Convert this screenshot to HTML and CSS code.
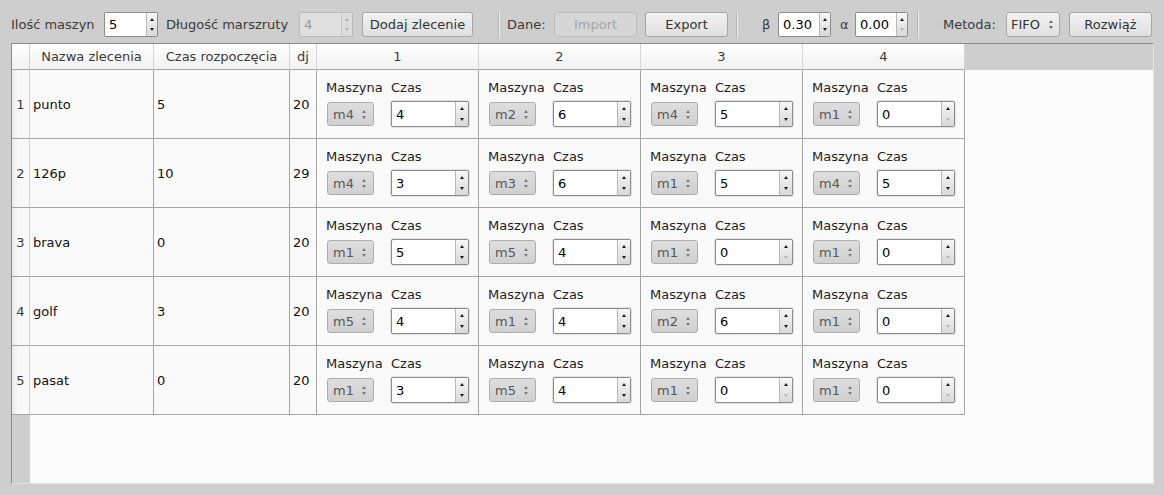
FILE: index.html
```html
<!DOCTYPE html>
<html lang="pl">
<head>
<meta charset="utf-8">
<title>Zlecenia</title>
<link rel="stylesheet" href="styles.css">
</head>
<body>
<div class="toolbar">
  <span class="lbl w-ilosc">Ilość maszyn</span>
  <div class="spin tb-spin"><span class="val">5</span><span class="arr"><i class="up"></i><i class="dn"></i></span></div>
  <span class="lbl w-dlug">Długość marszruty</span>
  <div class="spin tb-spin dis"><span class="val">4</span><span class="arr"><i class="up"></i><i class="dn"></i></span></div>
  <div class="btn w-dodaj">Dodaj zlecenie</div>
  <div class="sep sep1"></div>
  <span class="lbl w-dane">Dane:</span>
  <div class="btn w-imp dis">Import</div>
  <div class="btn w-exp">Export</div>
  <div class="sep sep2"></div>
  <span class="lbl w-beta">β</span>
  <div class="spin tb-spin w-num"><span class="val">0.30</span><span class="arr"><i class="up"></i><i class="dn"></i></span></div>
  <span class="lbl w-alfa">α</span>
  <div class="spin tb-spin w-num min"><span class="val">0.00</span><span class="arr"><i class="up"></i><i class="dn"></i></span></div>
  <div class="sep sep3"></div>
  <span class="lbl w-met">Metoda:</span>
  <div class="combo tb-combo"><span class="val">FIFO</span><span class="carr"><i class="up"></i><i class="dn"></i></span></div>
  <div class="btn w-roz">Rozwiąż</div>
</div>

<div class="table">
  <div class="hc corner"></div>
  <div class="hc">Nazwa zlecenia</div>
  <div class="hc">Czas rozpoczęcia</div>
  <div class="hc">dj</div>
  <div class="hc">1</div>
  <div class="hc">2</div>
  <div class="hc">3</div>
  <div class="hc">4</div>
  <div class="hfill"></div>

  <!-- row 1 -->
  <div class="vh">1</div>
  <div class="c">punto</div>
  <div class="c">5</div>
  <div class="c">20</div>
  <div class="c w"><div class="labs"><span class="l1">Maszyna</span><span>Czas</span></div><div class="wids"><div class="combo cc"><span class="val">m4</span><span class="carr"><i class="up"></i><i class="dn"></i></span></div><div class="spin cs"><span class="val">4</span><span class="arr"><i class="up"></i><i class="dn"></i></span></div></div></div>
  <div class="c w"><div class="labs"><span class="l1">Maszyna</span><span>Czas</span></div><div class="wids"><div class="combo cc"><span class="val">m2</span><span class="carr"><i class="up"></i><i class="dn"></i></span></div><div class="spin cs"><span class="val">6</span><span class="arr"><i class="up"></i><i class="dn"></i></span></div></div></div>
  <div class="c w"><div class="labs"><span class="l1">Maszyna</span><span>Czas</span></div><div class="wids"><div class="combo cc"><span class="val">m4</span><span class="carr"><i class="up"></i><i class="dn"></i></span></div><div class="spin cs"><span class="val">5</span><span class="arr"><i class="up"></i><i class="dn"></i></span></div></div></div>
  <div class="c w"><div class="labs"><span class="l1">Maszyna</span><span>Czas</span></div><div class="wids"><div class="combo cc"><span class="val">m1</span><span class="carr"><i class="up"></i><i class="dn"></i></span></div><div class="spin cs min"><span class="val">0</span><span class="arr"><i class="up"></i><i class="dn"></i></span></div></div></div>
  <div class="bfill"></div>

  <!-- row 2 -->
  <div class="vh">2</div>
  <div class="c">126p</div>
  <div class="c">10</div>
  <div class="c">29</div>
  <div class="c w"><div class="labs"><span class="l1">Maszyna</span><span>Czas</span></div><div class="wids"><div class="combo cc"><span class="val">m4</span><span class="carr"><i class="up"></i><i class="dn"></i></span></div><div class="spin cs"><span class="val">3</span><span class="arr"><i class="up"></i><i class="dn"></i></span></div></div></div>
  <div class="c w"><div class="labs"><span class="l1">Maszyna</span><span>Czas</span></div><div class="wids"><div class="combo cc"><span class="val">m3</span><span class="carr"><i class="up"></i><i class="dn"></i></span></div><div class="spin cs"><span class="val">6</span><span class="arr"><i class="up"></i><i class="dn"></i></span></div></div></div>
  <div class="c w"><div class="labs"><span class="l1">Maszyna</span><span>Czas</span></div><div class="wids"><div class="combo cc"><span class="val">m1</span><span class="carr"><i class="up"></i><i class="dn"></i></span></div><div class="spin cs"><span class="val">5</span><span class="arr"><i class="up"></i><i class="dn"></i></span></div></div></div>
  <div class="c w"><div class="labs"><span class="l1">Maszyna</span><span>Czas</span></div><div class="wids"><div class="combo cc"><span class="val">m4</span><span class="carr"><i class="up"></i><i class="dn"></i></span></div><div class="spin cs"><span class="val">5</span><span class="arr"><i class="up"></i><i class="dn"></i></span></div></div></div>
  <div class="bfill"></div>

  <!-- row 3 -->
  <div class="vh">3</div>
  <div class="c">brava</div>
  <div class="c">0</div>
  <div class="c">20</div>
  <div class="c w"><div class="labs"><span class="l1">Maszyna</span><span>Czas</span></div><div class="wids"><div class="combo cc"><span class="val">m1</span><span class="carr"><i class="up"></i><i class="dn"></i></span></div><div class="spin cs"><span class="val">5</span><span class="arr"><i class="up"></i><i class="dn"></i></span></div></div></div>
  <div class="c w"><div class="labs"><span class="l1">Maszyna</span><span>Czas</span></div><div class="wids"><div class="combo cc"><span class="val">m5</span><span class="carr"><i class="up"></i><i class="dn"></i></span></div><div class="spin cs"><span class="val">4</span><span class="arr"><i class="up"></i><i class="dn"></i></span></div></div></div>
  <div class="c w"><div class="labs"><span class="l1">Maszyna</span><span>Czas</span></div><div class="wids"><div class="combo cc"><span class="val">m1</span><span class="carr"><i class="up"></i><i class="dn"></i></span></div><div class="spin cs min"><span class="val">0</span><span class="arr"><i class="up"></i><i class="dn"></i></span></div></div></div>
  <div class="c w"><div class="labs"><span class="l1">Maszyna</span><span>Czas</span></div><div class="wids"><div class="combo cc"><span class="val">m1</span><span class="carr"><i class="up"></i><i class="dn"></i></span></div><div class="spin cs min"><span class="val">0</span><span class="arr"><i class="up"></i><i class="dn"></i></span></div></div></div>
  <div class="bfill"></div>

  <!-- row 4 -->
  <div class="vh">4</div>
  <div class="c">golf</div>
  <div class="c">3</div>
  <div class="c">20</div>
  <div class="c w"><div class="labs"><span class="l1">Maszyna</span><span>Czas</span></div><div class="wids"><div class="combo cc"><span class="val">m5</span><span class="carr"><i class="up"></i><i class="dn"></i></span></div><div class="spin cs"><span class="val">4</span><span class="arr"><i class="up"></i><i class="dn"></i></span></div></div></div>
  <div class="c w"><div class="labs"><span class="l1">Maszyna</span><span>Czas</span></div><div class="wids"><div class="combo cc"><span class="val">m1</span><span class="carr"><i class="up"></i><i class="dn"></i></span></div><div class="spin cs"><span class="val">4</span><span class="arr"><i class="up"></i><i class="dn"></i></span></div></div></div>
  <div class="c w"><div class="labs"><span class="l1">Maszyna</span><span>Czas</span></div><div class="wids"><div class="combo cc"><span class="val">m2</span><span class="carr"><i class="up"></i><i class="dn"></i></span></div><div class="spin cs"><span class="val">6</span><span class="arr"><i class="up"></i><i class="dn"></i></span></div></div></div>
  <div class="c w"><div class="labs"><span class="l1">Maszyna</span><span>Czas</span></div><div class="wids"><div class="combo cc"><span class="val">m1</span><span class="carr"><i class="up"></i><i class="dn"></i></span></div><div class="spin cs min"><span class="val">0</span><span class="arr"><i class="up"></i><i class="dn"></i></span></div></div></div>
  <div class="bfill"></div>

  <!-- row 5 -->
  <div class="vh">5</div>
  <div class="c">pasat</div>
  <div class="c">0</div>
  <div class="c">20</div>
  <div class="c w"><div class="labs"><span class="l1">Maszyna</span><span>Czas</span></div><div class="wids"><div class="combo cc"><span class="val">m1</span><span class="carr"><i class="up"></i><i class="dn"></i></span></div><div class="spin cs"><span class="val">3</span><span class="arr"><i class="up"></i><i class="dn"></i></span></div></div></div>
  <div class="c w"><div class="labs"><span class="l1">Maszyna</span><span>Czas</span></div><div class="wids"><div class="combo cc"><span class="val">m5</span><span class="carr"><i class="up"></i><i class="dn"></i></span></div><div class="spin cs"><span class="val">4</span><span class="arr"><i class="up"></i><i class="dn"></i></span></div></div></div>
  <div class="c w"><div class="labs"><span class="l1">Maszyna</span><span>Czas</span></div><div class="wids"><div class="combo cc"><span class="val">m1</span><span class="carr"><i class="up"></i><i class="dn"></i></span></div><div class="spin cs min"><span class="val">0</span><span class="arr"><i class="up"></i><i class="dn"></i></span></div></div></div>
  <div class="c w"><div class="labs"><span class="l1">Maszyna</span><span>Czas</span></div><div class="wids"><div class="combo cc"><span class="val">m1</span><span class="carr"><i class="up"></i><i class="dn"></i></span></div><div class="spin cs min"><span class="val">0</span><span class="arr"><i class="up"></i><i class="dn"></i></span></div></div></div>
  <div class="bfill"></div>

  <div class="vfill"></div>
  <div class="efill"></div>
</div>
</body>
</html>
```

FILE: styles.css
```css
html, body {
  margin: 0;
  padding: 0;
}
body {
  width: 1164px;
  height: 495px;
  overflow: hidden;
  background: #cecece;
  font-family: "DejaVu Sans", "Noto Sans", sans-serif;
  font-size: 13px;
  color: #222;
}

/* ---------- toolbar ---------- */
.toolbar {
  display: flex;
  align-items: center;
  height: 43px;
  box-sizing: border-box;
  padding: 12px 0 6px 11px;
}
.lbl {
  line-height: 15px;
  white-space: nowrap;
  color: #3a3a3a;
}
.w-ilosc { width: 93px; }
.w-dlug { width: 133px; margin-left: 8px; }
.w-dane { width: 47px; margin-left: 7px; }
.w-beta { width: 16px; margin-left: 24px; }
.w-alfa { width: 15px; margin-left: 9px; }
.w-met { width: 63px; margin-left: 24px; }

.sep {
  width: 1px;
  height: 26px;
  background: #b6b6b6;
  border-right: 1px solid #efefef;
}
.sep1 { margin-left: 25px; }
.sep2 { margin-left: 8px; }
.sep3 { margin-left: 9px; }

/* ---------- buttons ---------- */
.btn {
  height: 25px;
  box-sizing: border-box;
  border: 1px solid #a6a6a6;
  border-radius: 3px;
  background: linear-gradient(#f2f2f2, #dfdfdf);
  color: #333;
  display: flex;
  align-items: center;
  justify-content: center;
  white-space: nowrap;
}
.btn.dis {
  background: #d6d6d6;
  border-color: #bcbcbc;
  color: #a4a4a4;
}
.w-dodaj { width: 111px; margin-left: 9px; }
.w-imp { width: 83px; }
.w-exp { width: 83px; margin-left: 8px; }
.w-roz { width: 83px; margin-left: 9px; }

/* ---------- spin boxes ---------- */
.spin {
  display: flex;
  box-sizing: border-box;
  border: 1px solid #8c8c8c;
  border-radius: 2px;
  background: #fff;
}
.spin .val {
  flex: 1;
  padding-left: 4px;
  color: #000;
  display: flex;
  align-items: center;
}
.spin .arr {
  width: 10px;
  border-left: 1px solid #b8b8b8;
  background: linear-gradient(#f7f7f7, #d9d9d9);
  display: flex;
  flex-direction: column;
  align-items: center;
  justify-content: center;
  gap: 7px;
}
.up, .dn {
  display: block;
  width: 0;
  height: 0;
  border-left: 2px solid transparent;
  border-right: 2px solid transparent;
}
.up { border-bottom: 3px solid #1e1e1e; }
.dn { border-top: 3px solid #1e1e1e; }
.spin.min .dn { border-top-color: #b6b6b6; }

.tb-spin {
  width: 54px;
  height: 25px;
}
.tb-spin.w-num { width: 53px; }
.spin.dis {
  background: #dfdfdf;
  border-color: #b9b9b9;
}
.spin.dis .val { color: #9b9b9b; }
.spin.dis .arr {
  background: #dcdcdc;
  border-left-color: #c6c6c6;
}
.spin.dis .up { border-bottom-color: #b4b4b4; }
.spin.dis .dn { border-top-color: #b4b4b4; }

/* ---------- combo boxes ---------- */
.combo {
  display: flex;
  align-items: center;
  box-sizing: border-box;
  border: 1px solid #a8a8a8;
  border-radius: 3px;
  background: linear-gradient(#f2f2f2, #e0e0e0);
  color: #333;
}
.combo .val {
  flex: 1;
  padding-left: 4px;
}
.combo .carr {
  width: 13px;
  display: flex;
  flex-direction: column;
  align-items: center;
  gap: 3px;
  margin-right: 2px;
}
.combo .up { border-bottom-color: #6c6c6c; }
.combo .dn { border-top-color: #6c6c6c; }
.tb-combo {
  width: 54px;
  height: 25px;
}

/* ---------- table ---------- */
.table {
  margin-left: 11px;
  width: 1143px;
  height: 441px;
  box-sizing: border-box;
  border: 1px solid;
  border-color: #8a8a8a #e4e4e4 #e4e4e4 #8a8a8a;
  background: #fbfbfb;
  display: grid;
  grid-template-columns: 18px 124px 136px 27px repeat(4, 162px) 1fr;
  grid-template-rows: 26px repeat(5, 69px) 1fr;
}
.hc {
  box-sizing: border-box;
  border-right: 1px solid #d6d6d6;
  border-bottom: 1px solid #a6a6a6;
  background: linear-gradient(#ffffff, #f1f1f1);
  color: #3a3a3a;
  display: flex;
  align-items: center;
  justify-content: center;
  white-space: nowrap;
}
.hc.corner {
  border-right-color: #d0d0d0;
}
.hfill {
  background: #cecece;
}
.vh {
  box-sizing: border-box;
  border-right: 1px solid #d0d0d0;
  border-bottom: 1px solid #a6a6a6;
  background: linear-gradient(to right, #e9e9e9, #f8f8f8 35%, #fafafa);
  color: #3a3a3a;
  display: flex;
  align-items: center;
  justify-content: center;
}
.c {
  box-sizing: border-box;
  border-right: 1px solid #a6a6a6;
  border-bottom: 1px solid #a6a6a6;
  background: #fafafa;
  color: #111;
  padding-left: 3px;
  display: flex;
  align-items: center;
  white-space: nowrap;
}
.c.w {
  flex-direction: column;
  align-items: flex-start;
  padding: 10px 0 0 9px;
}
.labs {
  display: flex;
  line-height: 15px;
  color: #1e1e1e;
}
.labs .l1 { width: 65px; }
.wids {
  display: flex;
  align-items: center;
  height: 26px;
  margin-top: 6px;
  padding-left: 1px;
}
.cc {
  width: 47px;
  height: 24px;
  background: linear-gradient(#dedede, #d0d0d0);
  border-color: #adadad;
  color: #575757;
}
.cc .val { padding-left: 5px; }
.cc .carr { margin-right: 3px; }
.cc .up { border-bottom-color: #7a7a7a; }
.cc .dn { border-top-color: #7a7a7a; }
.cs {
  width: 78px;
  height: 26px;
  margin-left: 17px;
  box-shadow: 0 0 0 1px #e2e2e2;
}
.cs .arr { width: 12px; gap: 8px; }
.bfill { background: #fbfbfb; }
.vfill { background: #cecece; }
.efill {
  grid-column: 2 / -1;
  background: #fbfbfb;
}
```
